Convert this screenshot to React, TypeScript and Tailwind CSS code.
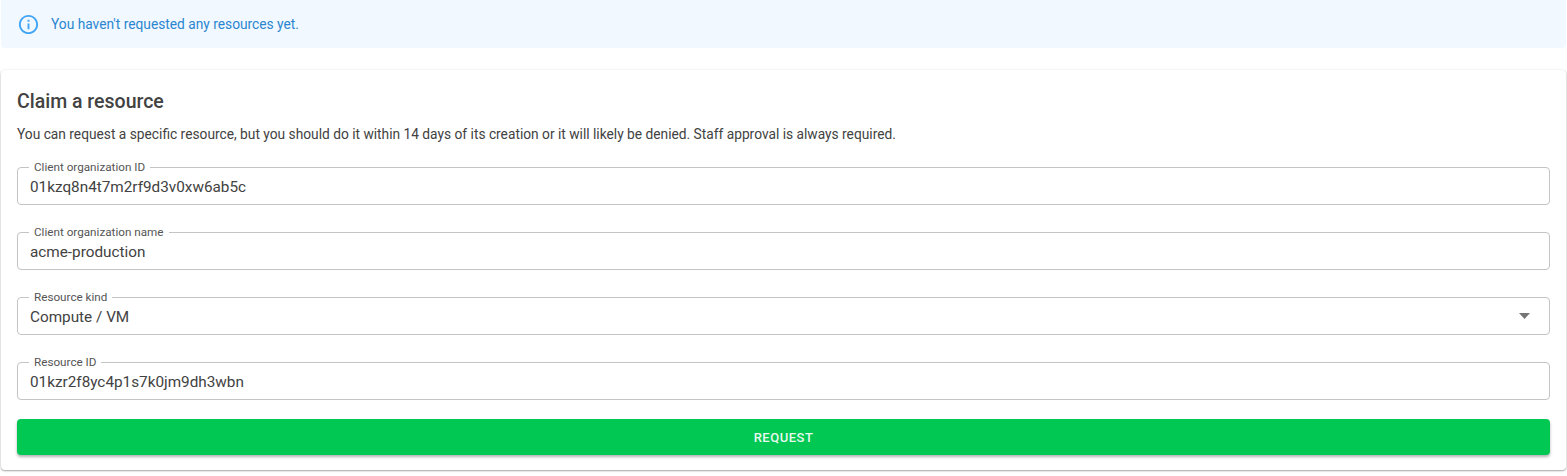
const FIELDS = [
  { label: 'Client organization ID', value: '01kzq8n4t7m2rf9d3v0xw6ab5c' },
  { label: 'Client organization name', value: 'acme-production' },
  { label: 'Resource kind', value: 'Compute / VM', select: true },
  { label: 'Resource ID', value: '01kzr2f8yc4p1s7k0jm9dh3wbn' },
];

function InfoIcon() {
  return (
    <svg width="23" height="23" viewBox="0 0 24 24" fill="#42a5f5">
      <path d="M11 7h2v2h-2zm0 4h2v6h-2zm1-9C6.48 2 2 6.48 2 12s4.48 10 10 10 10-4.48 10-10S17.52 2 12 2zm0 18c-4.41 0-8-3.59-8-8s3.59-8 8-8 8 3.59 8 8-3.59 8-8 8z" />
    </svg>
  );
}

function Field({ label, value, select }: { label: string; value: string; select?: boolean }) {
  return (
    <div className="relative flex h-[38px] items-center justify-between rounded-[4px] border border-[#c4c4c4] pr-[19px] pl-[12px]">
      <span className="absolute top-[-7px] left-[11px] bg-white px-[5px] text-[11.7px] leading-[13px] text-[#555555]">
        {label}
      </span>
      <span className="mt-[1px] text-[15.3px] leading-[20px] text-[#424242]">{value}</span>
      {select && (
        <svg width="11" height="6" viewBox="0 0 11 6" fill="#757575">
          <path d="M0 0h11L5.5 6z" />
        </svg>
      )}
    </div>
  );
}

export default function App() {
  return (
    <div className="flex h-[476px] flex-col bg-white px-[1px] font-['Roboto',sans-serif]">
      <div className="flex h-[48px] items-center gap-[11px] rounded-b-[4px] bg-[#f1f8ff] px-[16px] text-[13.75px] text-[#2a86d0]">
        <InfoIcon />
        <span>You haven't requested any resources yet.</span>
      </div>

      <div className="mt-[22px] flex h-[400px] flex-col rounded-[4px] bg-white px-[16px] pt-[21px] shadow-[0_1px_2px_rgba(0,0,0,0.35),0_0_2px_rgba(0,0,0,0.08)]">
        <h2 className="text-[19.5px] leading-[22px] font-medium text-[#424242]">Claim a resource</h2>
        <p className="mt-[11px] text-[13.75px] leading-[20px] text-[#424242]">
          You can request a specific resource, but you should do it within 14 days of its creation or it will likely be denied. Staff approval is always required.
        </p>

        <div className="mt-[23px] flex flex-col gap-[27px]">
          {FIELDS.map((f) => (
            <Field key={f.label} label={f.label} value={f.value} select={f.select} />
          ))}
        </div>

        <button className="mt-[19px] h-[36px] w-full rounded-[4px] bg-[#00c853] pt-[1px] text-[13px] font-medium tracking-[0.5px] text-[#e8f8ee] shadow-[0_2px_3px_rgba(0,0,0,0.3)]">
          REQUEST
        </button>
      </div>
    </div>
  );
}
